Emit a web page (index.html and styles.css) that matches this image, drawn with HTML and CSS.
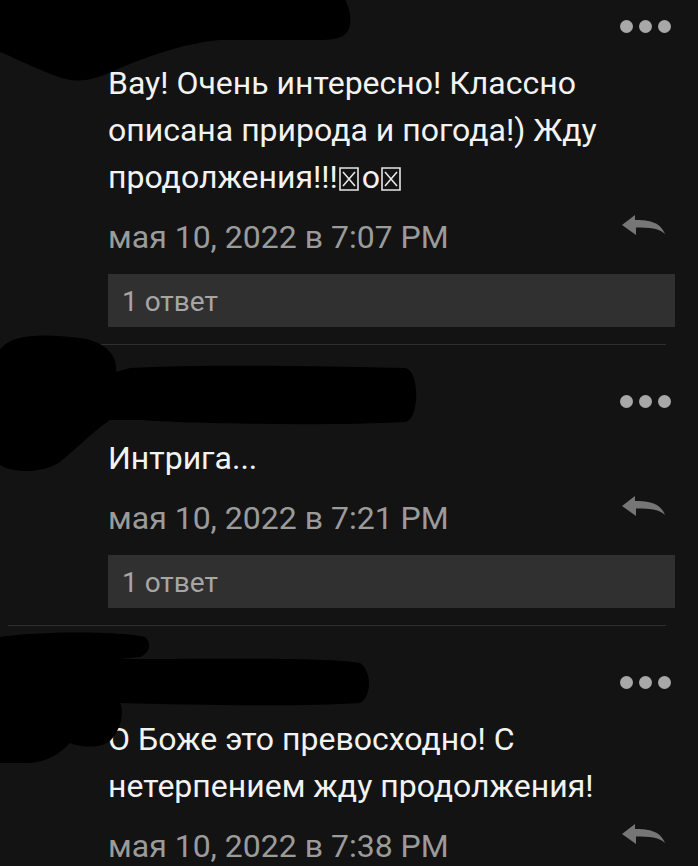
FILE: index.html
```
<!DOCTYPE html>
<html lang="ru">
  <head>
    <meta charset="UTF-8" />
    <meta name="viewport" content="width=device-width, initial-scale=1.0" />
    <title>Комментарии</title>
    <link rel="stylesheet" href="styles.css">
  </head>
  <body>
    <div class="thread">
      <div class="comment">
        <svg class="redact" width="698" height="140" viewBox="0 0 698 140">
          <g transform="translate(0,30)">
            <path d="M0 -30 H330 C345 -2 352 10 350 24 C348 36 340 40 320 40 H220 C180 44 150 56 120 68 C100 78 85 82 70 80 C50 76 20 60 0 52 Z" />
          </g>
        </svg>
        <div class="comment-head">
          <span class="dots"><i></i><i></i><i></i></span>
        </div>
        <div class="comment-body">
          <p class="comment-text">Вау! Очень интересно! Классно описана природа и погода!) Жду продолжения!!!<svg class="box" width="20" height="24" viewBox="0 0 20 24"><path d="M1 1 H19 V23 H1 Z M4 5 L16 19 M16 5 L4 19" /></svg>o<svg class="box" width="20" height="24" viewBox="0 0 20 24"><path d="M1 1 H19 V23 H1 Z M4 5 L16 19 M16 5 L4 19" /></svg></p>
          <div class="comment-meta">
            <span class="date">мая 10, 2022 в 7:07 PM</span>
            <svg class="reply" width="43" height="20" viewBox="0 0 43 20"><path d="M0 10 L13 0 L13 5 C25 5 38 6 43 19 C37 13 27 12.5 14 12.5 L14 20 Z" /></svg>
          </div>
          <div class="replies">1 ответ</div>
        </div>
      </div>

      <hr class="divider" />

      <div class="comment">
        <svg class="redact" width="698" height="140" viewBox="0 0 698 140">
          <g transform="translate(0,-345)">
            <path d="M0 350 C10 335 40 333 80 338 C110 342 118 360 116 372 L130 368 C200 364 330 366 405 368 C420 370 420 420 405 422 C330 426 200 424 140 420 L110 420 C95 430 80 445 60 462 C40 475 10 472 0 465 Z" />
          </g>
        </svg>
        <div class="comment-head">
          <span class="dots"><i></i><i></i><i></i></span>
        </div>
        <div class="comment-body">
          <p class="comment-text">Интрига...</p>
          <div class="comment-meta">
            <span class="date">мая 10, 2022 в 7:21 PM</span>
            <svg class="reply" width="43" height="20" viewBox="0 0 43 20"><path d="M0 10 L13 0 L13 5 C25 5 38 6 43 19 C37 13 27 12.5 14 12.5 L14 20 Z" /></svg>
          </div>
          <div class="replies">1 ответ</div>
        </div>
      </div>

      <hr class="divider" />

      <div class="comment">
        <svg class="redact" width="698" height="150" viewBox="0 0 698 150">
          <g transform="translate(0,-625)">
            <path d="M0 636 C40 630 120 630 145 636 C152 642 150 652 140 656 L120 658 C200 658 330 656 360 662 C372 670 372 695 360 702 C300 706 200 704 120 702 C125 712 120 730 110 740 C100 748 80 746 70 742 C60 752 50 760 30 762 L0 762 Z" />
          </g>
        </svg>
        <div class="comment-head">
          <span class="dots"><i></i><i></i><i></i></span>
        </div>
        <div class="comment-body">
          <p class="comment-text">О Боже это превосходно! С нетерпением жду продолжения!</p>
          <div class="comment-meta">
            <span class="date">мая 10, 2022 в 7:38 PM</span>
            <svg class="reply" width="43" height="20" viewBox="0 0 43 20"><path d="M0 10 L13 0 L13 5 C25 5 38 6 43 19 C37 13 27 12.5 14 12.5 L14 20 Z" /></svg>
          </div>
        </div>
      </div>
    </div>
  </body>
</html>
```

FILE: styles.css
```
body {
  margin: 0;
  padding: 0;
  background-color: #131313;
  color: #f2f2f2;
  font-family: Roboto, "Noto Sans", sans-serif;
  overflow: hidden;
}

.thread {
  margin-top: -30px;
}

.comment {
  position: relative;
}

.redact {
  position: absolute;
  top: 0;
  left: 0;
  overflow: visible;
  fill: #000;
}

.comment-head {
  height: 90px;
  box-sizing: border-box;
  padding: 50px 27px 0 0;
  display: flex;
  justify-content: flex-end;
}

.dots {
  display: flex;
  gap: 6px;
}

.dots i {
  width: 13px;
  height: 13px;
  border-radius: 50%;
  background-color: #a8a8a8;
}

.comment-body {
  padding: 0 23px 17px 108px;
}

.comment-text {
  margin: 0;
  font-size: 32px;
  line-height: 47px;
  padding-right: 40px;
}

.box {
  vertical-align: -3px;
  margin: 0 3px 0 1px;
  fill: none;
  stroke: #e6e6e6;
  stroke-width: 1.6;
}

.comment-meta {
  display: flex;
  justify-content: space-between;
  align-items: flex-start;
  margin-top: 16px;
  padding-right: 10px;
}

.date {
  font-size: 32px;
  line-height: 40px;
  color: #9b9b9b;
}

.reply {
  margin-top: -2px;
  fill: #767676;
}

.replies {
  margin-top: 17px;
  height: 53px;
  box-sizing: border-box;
  padding: 13px 14px 0;
  background-color: #303030;
  color: #a6a6a6;
  font-size: 28px;
  line-height: 30px;
}

.divider {
  margin: 0 32px 0 8px;
  border: 0;
  height: 1px;
  background-color: #2e2e2e;
}
```
